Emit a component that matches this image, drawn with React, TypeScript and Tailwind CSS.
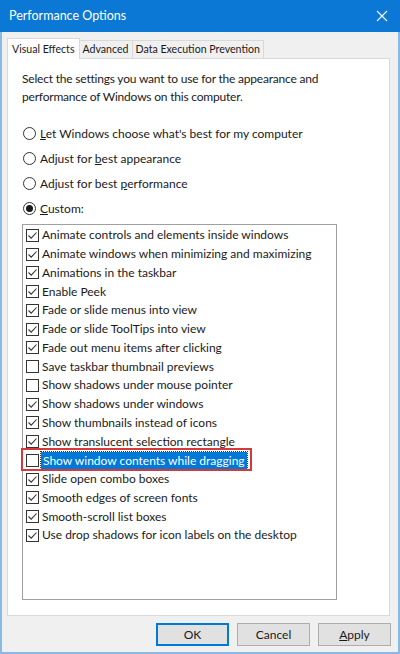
import React from "react";

const font = { fontFamily: 'Lato, "Noto Sans", sans-serif' };

const items: [string, boolean][] = [
  ["Animate controls and elements inside windows", true],
  ["Animate windows when minimizing and maximizing", true],
  ["Animations in the taskbar", true],
  ["Enable Peek", true],
  ["Fade or slide menus into view", true],
  ["Fade or slide ToolTips into view", true],
  ["Fade out menu items after clicking", true],
  ["Save taskbar thumbnail previews", false],
  ["Show shadows under mouse pointer", false],
  ["Show shadows under windows", true],
  ["Show thumbnails instead of icons", true],
  ["Show translucent selection rectangle", true],
  ["Show window contents while dragging", false],
  ["Slide open combo boxes", true],
  ["Smooth edges of screen fonts", true],
  ["Smooth-scroll list boxes", true],
  ["Use drop shadows for icon labels on the desktop", true],
];

function Check({ on }: { on: boolean }) {
  return (
    <div className="w-[13px] h-[13px] border border-[#333333] bg-white flex items-center justify-center shrink-0">
      {on && (
        <svg width="11" height="11" viewBox="0 0 11 11">
          <path d="M1.5 5.5 L4.2 8.2 L9.5 2.5" fill="none" stroke="#333" strokeWidth="1.1" />
        </svg>
      )}
    </div>
  );
}

function Radio({ on, children }: { on: boolean; children: React.ReactNode }) {
  return (
    <div className="flex items-center h-[25px] whitespace-nowrap">
      <div className="w-[13px] h-[13px] rounded-full border border-[#333333] bg-white flex items-center justify-center shrink-0">
        {on && <div className="w-[7px] h-[7px] rounded-full bg-[#1a1a1a]" />}
      </div>
      <span className="ml-[4px]">{children}</span>
    </div>
  );
}

export default function App() {
  return (
    <div
      className="w-[400px] h-[654px] bg-[#f0f0f0] text-[12px] text-[#1a1a1a] border-x-[2px] border-b-[2px] border-[#8ab9e6] flex flex-col whitespace-nowrap"
      style={font}
    >
      <div className="h-[32px] bg-[#0a78d4] flex items-center justify-between text-white -mx-[2px] pl-[9px] pr-[12px]">
        <span className="text-[12.5px]">Performance Options</span>
        <svg width="12" height="12" viewBox="0 0 12 12">
          <path d="M1 1 L11 11 M11 1 L1 11" stroke="white" strokeWidth="1.1" />
        </svg>
      </div>
      <div className="flex flex-col px-[5px] pt-[5px] flex-1">
        <div className="flex items-end h-[21px] leading-none text-[10.6px]">
          <div className="h-[21px] bg-white border border-b-0 border-[#d9d9d9] px-[4px] flex items-center relative z-10 -mb-px">
            Visual Effects
          </div>
          <div className="h-[18px] border border-l-0 border-b-0 border-[#d9d9d9] px-[3px] flex items-center">
            Advanced
          </div>
          <div className="h-[18px] border border-l-0 border-b-0 border-[#d9d9d9] px-[3px] flex items-center">
            Data Execution Prevention
          </div>
        </div>
        <div className="h-[558px] w-[383px] bg-white border border-[#d9d9d9] pl-[14px] pt-[11px]">
          <p className="leading-[18px] tracking-[-0.2px]">
            Select the settings you want to use for the appearance and
            <br />
            performance of Windows on this computer.
          </p>
          <div className="mt-[15px] ml-px">
            <Radio on={false}>
              <u>L</u>et Windows choose what's best for my computer
            </Radio>
            <Radio on={false}>
              Adjust for <u>b</u>est appearance
            </Radio>
            <Radio on={false}>
              Adjust for best <u>p</u>erformance
            </Radio>
            <Radio on={true}>
              <u>C</u>ustom:
            </Radio>
          </div>
          <div className="mt-[3px] w-[315px] h-[376px] border border-[#a0a0a0] pl-[3px] pt-[1px]">
            {items.map(([label, on], i) => (
              <div key={label} className="h-[18.75px] flex items-center relative">
                <Check on={on} />
                {i === 12 ? (
                  <>
                    <span className="ml-[2px] px-[2px] bg-[#0078d7] text-white leading-[17px] outline-1 outline-dotted outline-[#333]">
                      {label}
                    </span>
                    <div className="absolute left-[-5px] top-[-3px] w-[231px] h-[23px] border-2 border-[#d6393c] pointer-events-none" />
                  </>
                ) : (
                  <span className="ml-[3px]">{label}</span>
                )}
              </div>
            ))}
          </div>
        </div>
        <div className="flex justify-end gap-[8px] pr-[2px] mt-[7px]">
          <button className="w-[73px] h-[23px] bg-[#e1e1e1] border border-[#0078d7] outline outline-1 outline-[#0078d7] -outline-offset-2">
            OK
          </button>
          <button className="w-[73px] h-[23px] bg-[#e1e1e1] border border-[#adadad]">Cancel</button>
          <button className="w-[73px] h-[23px] bg-[#e1e1e1] border border-[#adadad]">
            <u>A</u>pply
          </button>
        </div>
      </div>
    </div>
  );
}
